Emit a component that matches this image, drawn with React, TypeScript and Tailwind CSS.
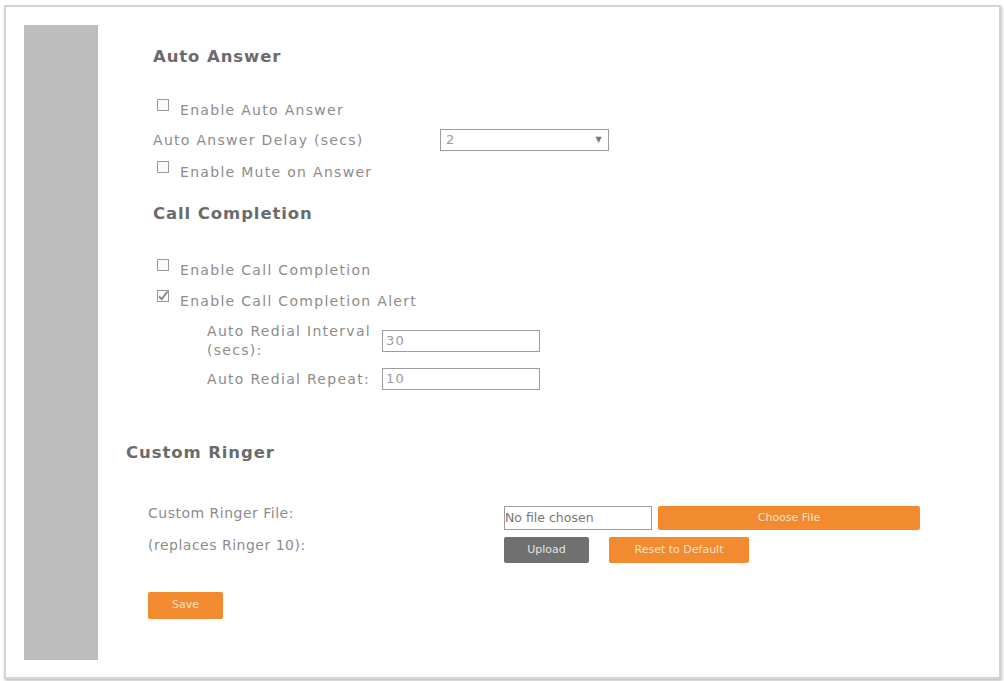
const body = { fontFamily: '"DejaVu Sans", Verdana, sans-serif' };
const head = { fontFamily: '"DejaVu Sans", Verdana, sans-serif' };

const Checkbox = ({ checked = false }: { checked?: boolean }) => (
  <span className="relative -mt-[10px] mr-[11px] inline-flex h-[12px] w-[12px] shrink-0 items-center justify-center border border-[#9a9a9a] bg-[#fafafa]">
    {checked && (
      <svg viewBox="0 0 12 12" className="absolute h-[12px] w-[12px]">
        <path d="M2 6.5 L4.8 9 L10.5 1.5" fill="none" stroke="#8a8a8a" strokeWidth="2" />
      </svg>
    )}
  </span>
);

const CheckRow = ({ label, checked }: { label: string; checked?: boolean }) => (
  <div className="flex h-[28px] items-center pl-[4px]">
    <Checkbox checked={checked} />
    <span>{label}</span>
  </div>
);

const Heading = ({ children }: { children: string }) => (
  <h2 className="flex h-[30px] items-center text-[16.5px] font-bold tracking-[0.9px] text-[#6b6b6b]" style={head}>
    {children}
  </h2>
);

const TextBox = ({ value, width }: { value: string; width: string }) => (
  <div className={`flex h-[22px] items-center border border-[#9c9c9c] bg-white pl-[3px] text-[13px] text-[#9a9a9a] ${width}`}>
    {value}
  </div>
);

export default function App() {
  return (
    <div className="h-[681px] w-[1004px] bg-white pl-[4px] pt-[5px]" style={body}>
      <div className="flex h-[674px] w-[997px] border-2 border-[#d4d4d4] pl-[18px] pt-[18px] shadow-[1px_2px_3px_rgba(0,0,0,0.25)]">
        <div className="h-[635px] w-[74px] shrink-0 bg-[#bdbdbd]" />

        <div className="ml-[28px] flex flex-col text-[14px] tracking-[1.3px] text-[#8c8c8c]">
          <div className="flex flex-col pl-[27px]">
            <div className="h-[17px]" />
            <Heading>Auto Answer</Heading>

            <div className="mt-[24px]">
              <CheckRow label="Enable Auto Answer" />
            </div>
            <div className="mt-[2px] flex h-[28px] items-center">
              <span className="w-[287px]">Auto Answer Delay (secs)</span>
              <div className="flex h-[22px] w-[169px] items-center justify-between border border-[#9c9c9c] px-[5px] text-[13px] text-[#9a9a9a]">
                <span>2</span>
                <span className="text-[8px] text-[#777]">▼</span>
              </div>
            </div>
            <div className="mt-[4px]">
              <CheckRow label="Enable Mute on Answer" />
            </div>

            <div className="mt-[13px]">
              <Heading>Call Completion</Heading>
            </div>
            <div className="mt-[27px]">
              <CheckRow label="Enable Call Completion" />
            </div>
            <div className="mt-[3px]">
              <CheckRow label="Enable Call Completion Alert" checked />
            </div>

            <div className="mt-[8px] flex h-[36px] items-center pl-[54px]">
              <span className="w-[175px] leading-[19px]">
                Auto Redial Interval
                <br />
                (secs):
              </span>
              <TextBox value="30" width="w-[158px]" />
            </div>
            <div className="mt-[7px] flex h-[26px] items-center pl-[54px]">
              <span className="w-[175px]">Auto Redial Repeat:</span>
              <TextBox value="10" width="w-[158px]" />
            </div>
          </div>

          <div className="mt-[46px]">
            <Heading>Custom Ringer</Heading>
          </div>

          <div className="mt-[38px] flex pl-[22px] tracking-[0.5px]">
            <div className="-mt-[3px] flex w-[356px] flex-col">
              <span className="h-[32px]">Custom Ringer File:</span>
              <span>(replaces Ringer 10):</span>
            </div>
            <div className="flex flex-col gap-[7px]">
              <div className="flex items-center gap-[6px]">
                <div className="flex h-[24px] w-[148px] items-center border border-[#9c9c9c] text-[12.5px] tracking-normal text-[#777]">
                  No file chosen
                </div>
                <button className="h-[24px] w-[262px] rounded-[2px] bg-[#f28a30] text-[11px] tracking-normal text-[#fbe2c8]">
                  Choose File
                </button>
              </div>
              <div className="flex items-center">
                <button className="h-[26px] w-[85px] rounded-[2px] bg-[#707070] text-[11px] tracking-normal text-[#e4e4e4]">
                  Upload
                </button>
                <button className="ml-[20px] h-[26px] w-[140px] rounded-[2px] bg-[#f28a30] text-[11px] tracking-normal text-[#fbe2c8]">
                  Reset to Default
                </button>
              </div>
            </div>
          </div>

          <div className="mt-[29px] pl-[22px]">
            <button className="h-[27px] w-[75px] rounded-[2px] bg-[#f28a30] text-[11px] tracking-normal text-[#fbe2c8]">
              Save
            </button>
          </div>
        </div>
      </div>
    </div>
  );
}
